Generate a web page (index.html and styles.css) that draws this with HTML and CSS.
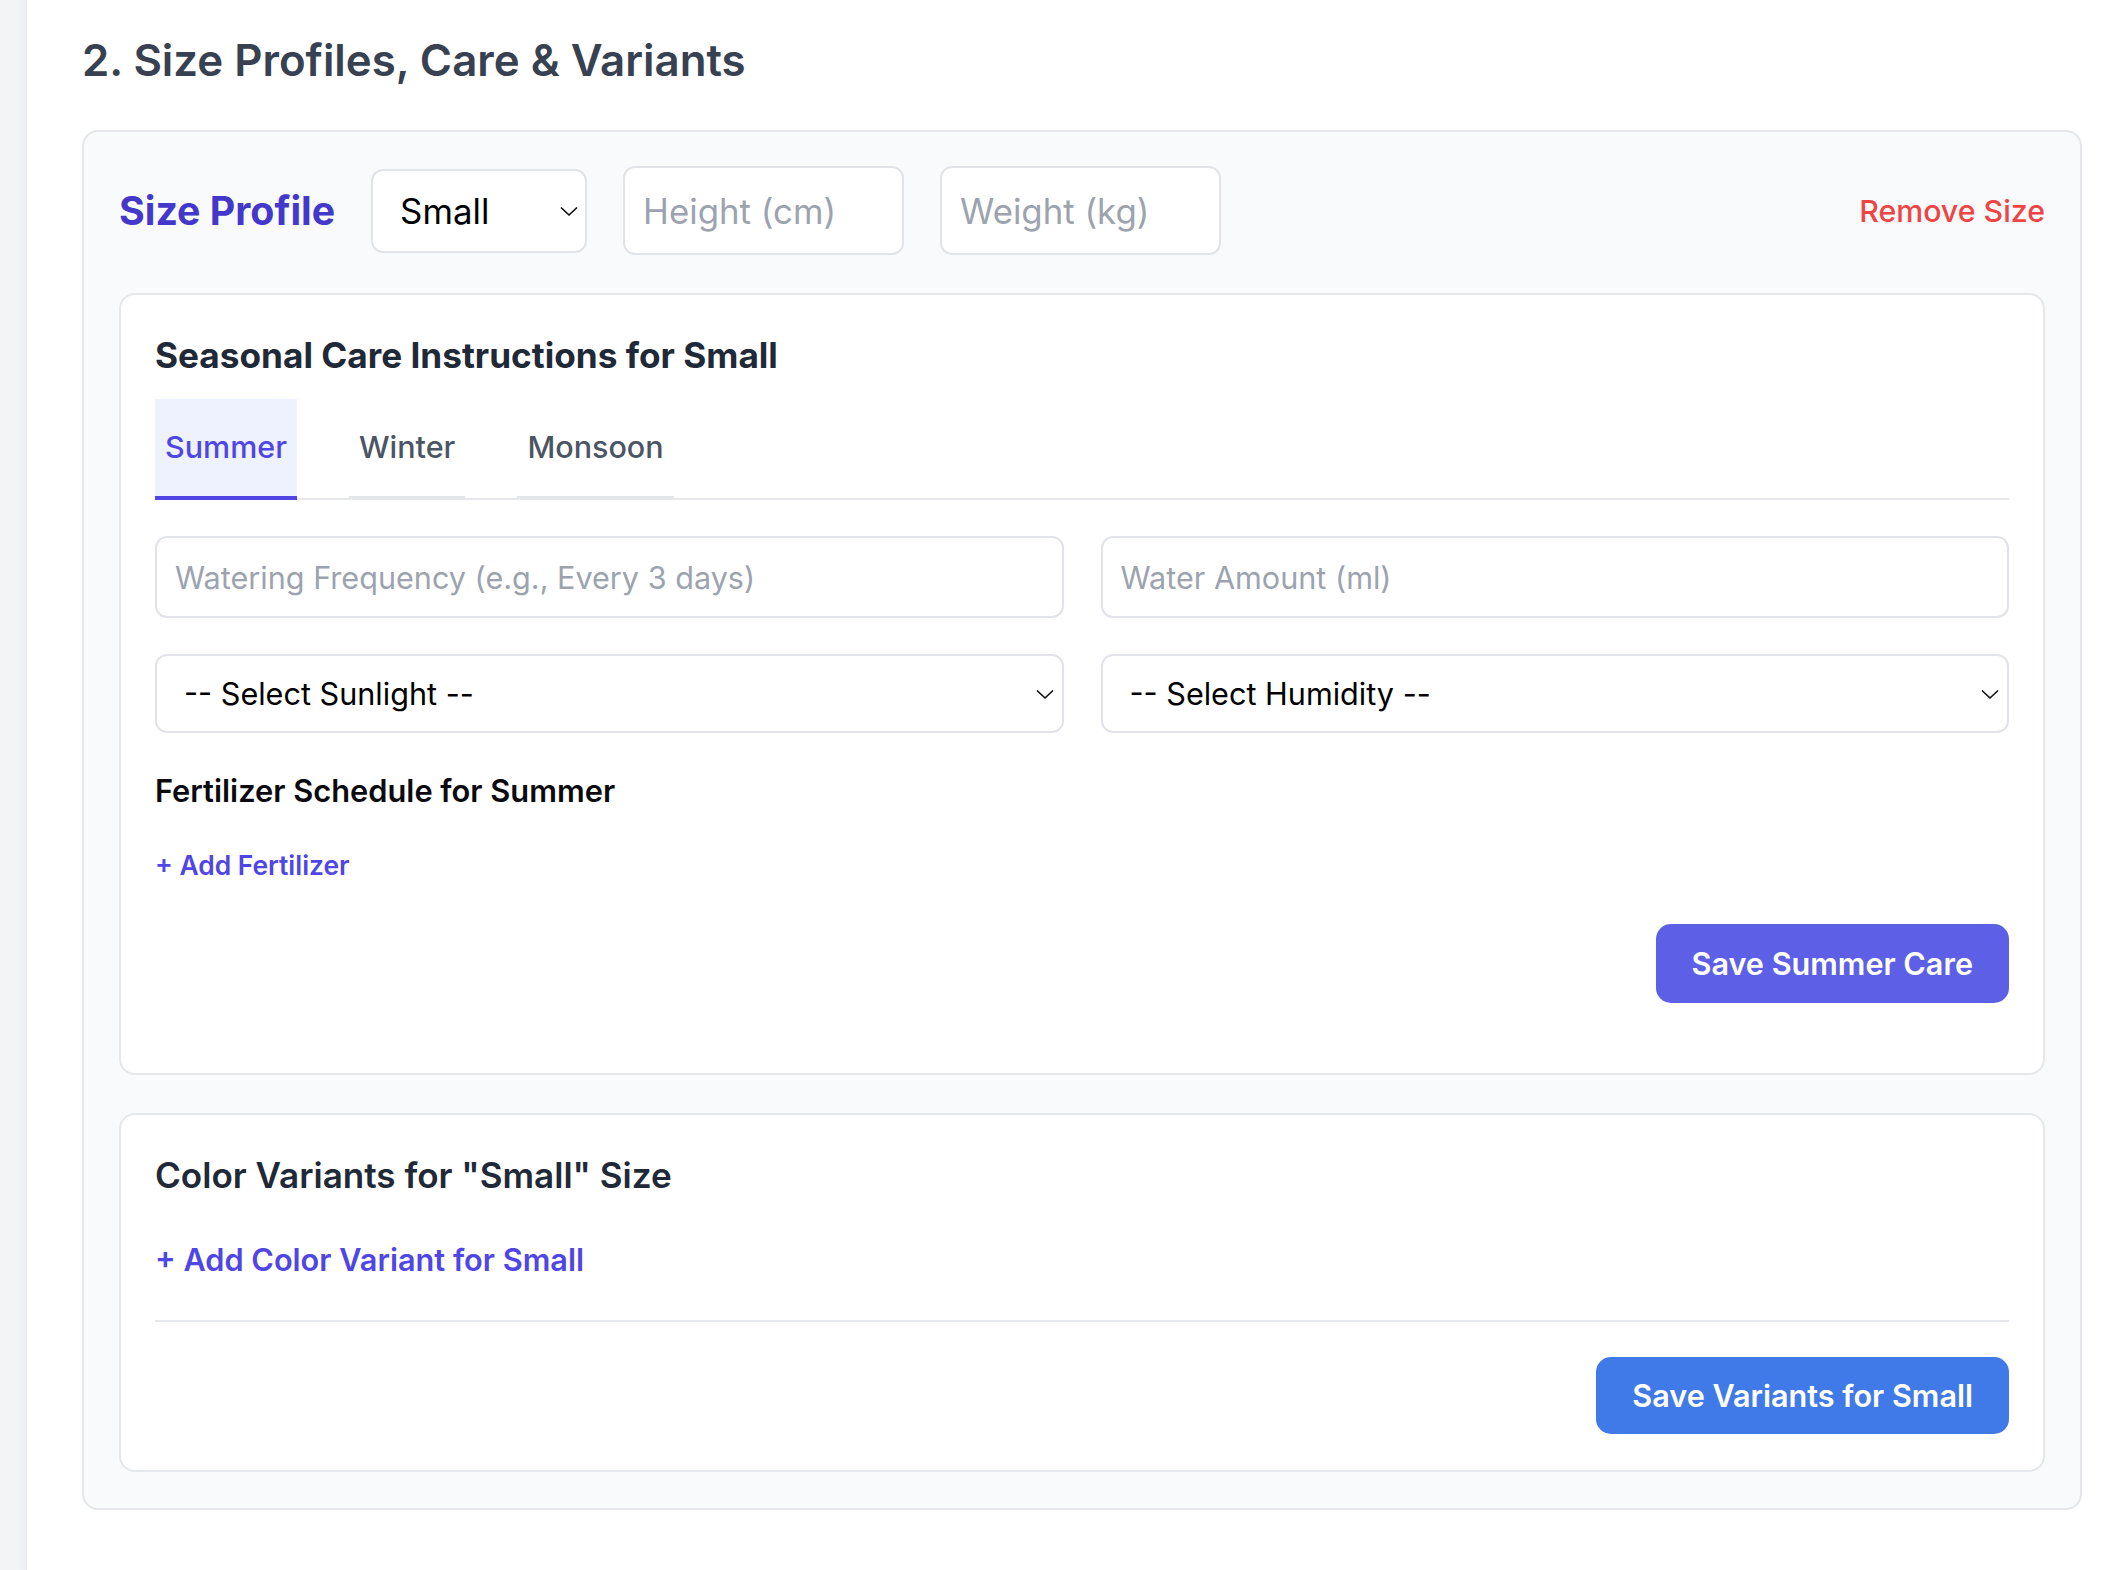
FILE: index.html
```html
<!DOCTYPE html>
<html lang="en">
<head>
<meta charset="utf-8">
<title>Size Profiles, Care &amp; Variants</title>
<link rel="stylesheet" href="styles.css">
</head>
<body>
<div class="layout">
  <aside class="rail"></aside>
  <main class="main">
    <h2 class="section-title">2. Size Profiles, Care &amp; Variants</h2>

    <section class="size-card">
      <div class="size-row">
        <h3 class="size-label">Size Profile</h3>
        <div class="select-wrap select-wrap--size">
          <select class="select select--size">
            <option>Small</option>
            <option>Medium</option>
            <option>Large</option>
          </select>
          <svg class="chev" viewBox="0 0 18 9" aria-hidden="true"><polyline points="1.5,1 9,8 16.5,1"/></svg>
        </div>
        <input class="field field--size" type="text" placeholder="Height (cm)">
        <input class="field field--size" type="text" placeholder="Weight (kg)">
        <button class="remove-btn" type="button">Remove Size</button>
      </div>

      <div class="panel panel--care">
        <h4 class="panel-title">Seasonal Care Instructions for Small</h4>
        <nav class="tabs">
          <button class="tab tab--active" type="button">Summer</button>
          <button class="tab" type="button">Winter</button>
          <button class="tab" type="button">Monsoon</button>
        </nav>

        <div class="form-grid">
          <input class="field" type="text" placeholder="Watering Frequency (e.g., Every 3 days)">
          <input class="field" type="text" placeholder="Water Amount (ml)">
          <div class="select-wrap">
            <select class="select">
              <option>-- Select Sunlight --</option>
            </select>
            <svg class="chev" viewBox="0 0 18 9" aria-hidden="true"><polyline points="1.5,1 9,8 16.5,1"/></svg>
          </div>
          <div class="select-wrap">
            <select class="select">
              <option>-- Select Humidity --</option>
            </select>
            <svg class="chev" viewBox="0 0 18 9" aria-hidden="true"><polyline points="1.5,1 9,8 16.5,1"/></svg>
          </div>
        </div>

        <h5 class="sub-title">Fertilizer Schedule for Summer</h5>
        <button class="link-btn link-btn--sm" type="button">+ Add Fertilizer</button>

        <div class="actions actions--care">
          <button class="btn btn--indigo" type="button">Save Summer Care</button>
        </div>
      </div>

      <div class="panel panel--variants">
        <h4 class="panel-title panel-title--medium">Color Variants for "Small" Size</h4>
        <button class="link-btn link-btn--lg" type="button">+ Add Color Variant for Small</button>
        <hr class="divider">
        <div class="actions">
          <button class="btn btn--blue" type="button">Save Variants for Small</button>
        </div>
      </div>
    </section>
  </main>
</div>
</body>
</html>
```
FILE: styles.css
```css
* { box-sizing: border-box; }

html, body {
  margin: 0;
  padding: 0;
  background: #ffffff;
  font-family: "Inter", "Noto Sans", sans-serif;
  color: #111827;
}

.layout {
  display: flex;
  min-height: 1570px;
}

.rail {
  width: 27px;
  flex: none;
  background: linear-gradient(to right, #f3f4f6 0%, #f3f4f6 70%, #eceef1 100%);
  border-right: 1px solid #e5e7eb;
}

.main {
  flex: 1;
  padding: 32px 34px 0 55px;
}

.section-title {
  margin: 0 0 40px;
  font-size: 43.8px;
  line-height: 58px;
  font-weight: 600;
  color: #374151;
}

.size-card {
  background: #f9fafb;
  border: 2px solid #e5e7eb;
  border-radius: 16px;
  padding: 34px 35px 36px;
}

.size-row {
  display: flex;
  align-items: center;
  gap: 36px;
  height: 89px;
  margin-bottom: 38px;
}

.size-label {
  margin: 0;
  font-size: 39.3px;
  line-height: 52px;
  font-weight: 700;
  color: #4338ca;
}

.select-wrap {
  position: relative;
}

.select {
  appearance: none;
  -webkit-appearance: none;
  width: 100%;
  height: 79px;
  margin: 0;
  padding: 0 40px 0 27px;
  border: 2px solid #e1e3e8;
  border-radius: 12px;
  background: #ffffff;
  font-family: inherit;
  font-size: 30.6px;
  color: #000000;
}

.select-wrap--size {
  width: 216px;
  flex: none;
}

.select--size {
  height: 84px;
  font-size: 34.8px;
  padding-left: 27px;
}

.chev {
  position: absolute;
  top: 50%;
  right: 10px;
  width: 18px;
  height: 9px;
  margin-top: -4px;
  fill: none;
  stroke: #111111;
  stroke-width: 1.7;
  stroke-linecap: round;
  stroke-linejoin: round;
  pointer-events: none;
}

.select-wrap--size .chev {
  right: 9px;
}

.field {
  height: 82px;
  margin: 0;
  padding: 0 18px;
  border: 2px solid #e1e3e8;
  border-radius: 12px;
  background: #ffffff;
  font-family: inherit;
  font-size: 30.6px;
  color: #111827;
  outline: none;
}

.field::placeholder {
  color: #9ca3af;
}

.field--size {
  width: 281px;
  height: 89px;
  font-size: 34.8px;
  flex: none;
}

.remove-btn {
  margin-left: auto;
  padding: 0;
  border: 0;
  background: none;
  font-family: inherit;
  font-size: 30.3px;
  line-height: 44px;
  font-weight: 500;
  color: #ef4444;
  cursor: pointer;
}

.panel {
  background: #ffffff;
  border: 2px solid #e5e7eb;
  border-radius: 16px;
  padding: 34px;
}

.panel--care {
  padding-bottom: 35px;
}

.panel--variants {
  margin-top: 38px;
  padding-bottom: 36px;
}

.panel-title {
  margin: 0;
  font-size: 35.2px;
  line-height: 52px;
  font-weight: 700;
  color: #1f2937;
}

.panel-title--medium {
  font-size: 35.1px;
  font-weight: 600;
}

.tabs {
  display: flex;
  gap: 52px;
  margin-top: 18px;
  border-bottom: 2px solid #e5e7eb;
}

.tab {
  margin: 0 0 -2px;
  padding: 26px 10px 27px;
  border: 0;
  border-bottom: 4px solid #e5e7eb;
  background: none;
  font-family: inherit;
  font-size: 30.5px;
  line-height: 44px;
  font-weight: 500;
  color: #4b5563;
  cursor: pointer;
}

.tab--active {
  background: #eef2ff;
  border-bottom-color: #4f46e5;
  color: #4f46e5;
}

.form-grid {
  display: grid;
  grid-template-columns: 1fr 1fr;
  column-gap: 37px;
  row-gap: 36px;
  margin-top: 36px;
}

.sub-title {
  margin: 36px 0 0;
  font-size: 30.8px;
  line-height: 44px;
  font-weight: 600;
  color: #0b0b0f;
}

.link-btn {
  display: block;
  padding: 0;
  border: 0;
  background: none;
  font-family: inherit;
  font-weight: 600;
  color: #4f46e5;
  cursor: pointer;
}

.link-btn--sm {
  margin-top: 33px;
  font-size: 26.4px;
  line-height: 38px;
}

.link-btn--lg {
  margin-top: 37px;
  font-size: 30.7px;
  line-height: 44px;
}

.actions {
  display: flex;
  justify-content: flex-end;
}

.actions--care {
  margin-top: 40px;
  margin-bottom: 35px;
}

.divider {
  margin: 38px 0 35px;
  border: 0;
  border-top: 2px solid #e5e7eb;
}

.btn {
  padding: 0 36px;
  border: 0;
  border-radius: 15px;
  font-family: inherit;
  font-size: 30.6px;
  font-weight: 600;
  color: #ffffff;
  cursor: pointer;
}

.btn--indigo {
  height: 79px;
  background: #5d60e6;
}

.btn--blue {
  height: 77px;
  background: #407ae8;
}
```
